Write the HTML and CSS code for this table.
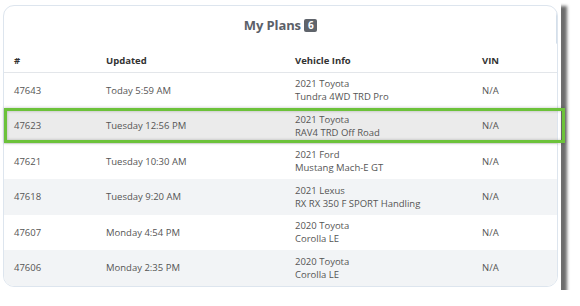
FILE: index.html
```html
<!DOCTYPE html>
<html>
<head>
<meta charset="utf-8">
<link rel="stylesheet" href="styles.css">
</head>
<body>
<div class="capture">
  <div class="card">
    <h1 class="title">My Plans <span class="badge">6</span></h1>
    <table class="plans">
      <thead>
        <tr><th class="c-id">#</th><th class="c-up">Updated</th><th class="c-veh">Vehicle Info</th><th class="c-vin">VIN</th></tr>
      </thead>
      <tbody>
        <tr><td>47643</td><td>Today 5:59 AM</td><td>2021 Toyota<br>Tundra 4WD TRD Pro</td><td>N/A</td></tr>
        <tr class="sel"><td>47623</td><td>Tuesday 12:56 PM</td><td>2021 Toyota<br>RAV4 TRD Off Road</td><td>N/A</td></tr>
        <tr><td>47621</td><td>Tuesday 10:30 AM</td><td>2021 Ford<br>Mustang Mach-E GT</td><td>N/A</td></tr>
        <tr><td>47618</td><td>Tuesday 9:20 AM</td><td>2021 Lexus<br>RX RX 350 F SPORT Handling</td><td>N/A</td></tr>
        <tr><td>47607</td><td>Monday 4:54 PM</td><td>2020 Toyota<br>Corolla LE</td><td>N/A</td></tr>
        <tr><td>47606</td><td>Monday 2:35 PM</td><td>2020 Toyota<br>Corolla LE</td><td>N/A</td></tr>
      </tbody>
    </table>
    <div class="thumb"></div>
  </div>
  <div class="highlight"></div>
</div>
</body>
</html>
```
FILE: styles.css
```css
html, body { margin: 0; padding: 0; background: #fff; }
body { font-family: "Open Sans", "Liberation Sans", sans-serif; color: #555; }
.capture {
  position: relative;
  width: 561px;
  height: 290px;
  background: #fff;
  box-shadow: 6px 6px 3px rgba(30,30,30,0.65);
  padding: 5px 3px 0 3px;
  box-sizing: border-box;
}
.card {
  position: relative;
  height: 280px;
  border: 1px solid #dde5ee;
  border-radius: 11px;
  background: #fff;
  overflow: hidden;
}
.title {
  margin: 0;
  padding: 10px 0 0;
  height: 34px;
  box-sizing: border-box;
  text-align: center;
  font-size: 13px;
  font-weight: 700;
  color: #5b6068;
  letter-spacing: -0.1px;
}
.badge {
  display: inline-block;
  background: #5f646b;
  color: #fff;
  font-size: 10px;
  line-height: 13px;
  width: 13px;
  border-radius: 2px;
  text-align: center;
  vertical-align: 1px;
}
.plans {
  width: 100%;
  border-collapse: collapse;
  font-size: 9.5px;
}
.plans th {
  text-align: left;
  font-weight: 700;
  color: #333;
  height: 32px;
  padding: 10px 0 0;
  box-sizing: border-box;
  border-bottom: 1px solid #e3e6ea;
}
.plans td {
  padding: 0;
  height: 35.5px;
  line-height: 13px;
  vertical-align: middle;
}
.plans th:first-child, .plans td:first-child { padding-left: 10px; width: 92px; }
.c-up { width: 189px; }
.c-veh { width: 187px; }
.plans tbody tr:nth-child(even) td { background: #f2f4f6; }
.plans tbody tr.sel td { background: #ebebeb; }
.thumb {
  position: absolute;
  right: -2px;
  top: 6px;
  width: 3px;
  height: 32px;
  background: #d4dfea;
  border-radius: 2px;
}
.highlight {
  position: absolute;
  left: 4px;
  top: 108px;
  width: 561px;
  height: 35px;
  box-sizing: border-box;
  border: 3px solid #6cc23a;
  box-shadow: inset 0 0 3px rgba(0,0,0,0.25), 0 0 3px rgba(0,0,0,0.25);
}
```
